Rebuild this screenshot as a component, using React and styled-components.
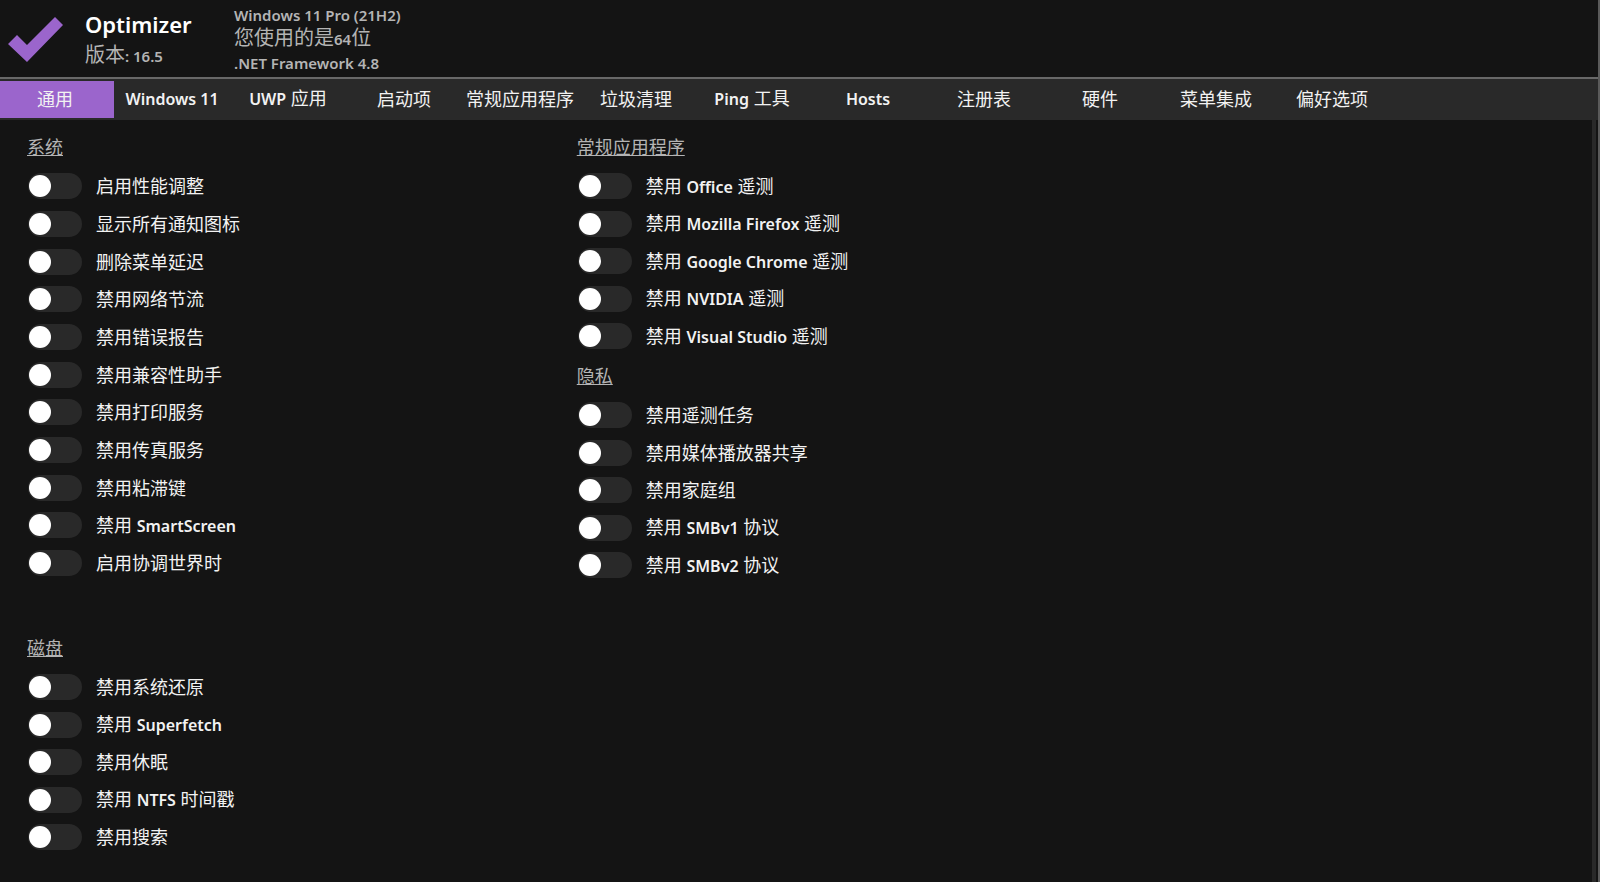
import React, { useState } from "react";
import styled, { createGlobalStyle } from "styled-components";

const GlobalStyle = createGlobalStyle`
    * {
        box-sizing: border-box;
    }

    body {
        margin: 0;
        background-color: #141414;
        color: #f2f2f2;
        font-family: "Noto Sans", "Noto Sans CJK SC", sans-serif;
        font-size: 18px;
        line-height: 24px;
    }
`

const StyledWindow = styled.div`
    display: flex;
    flex-direction: column;
    min-height: 100vh;
    border-right: 2px solid #5a5a5a;
`

const StyledHeader = styled.header`
    display: flex;
    align-items: flex-start;
    height: 79px;
    padding: 2px 8px;
    color: #b4b4b4;
    border-bottom: 2px solid #686868;

    & svg {
        width: 55px;
        height: 45px;
        margin-top: 15px;
        flex-shrink: 0;
    }
`

const Brand = styled.div`
    width: 149px;
    margin-left: 22px;
    padding-top: 8px;

    & h1 {
        margin: 0 0 2px;
        color: #ffffff;
        font-size: 22px;
        font-weight: 600;
        line-height: 28px;
    }

    & p {
        margin: 0;
        font-size: 20px;
        line-height: 30px;
    }
`

const SystemInfo = styled.ul`
    list-style: none;
    margin: 0;
    padding: 0;
    font-size: 20px;

    & li {
        height: 24px;
    }
`

const Latin = styled.span`
    font-size: ${({ $size }) => $size || 16}px;
    font-weight: 600;
`

const TabBar = styled.nav`
    display: flex;
    height: 41px;
    padding: 2px 0;
    background-color: #292929;
`

const Tab = styled.button`
    width: 116px;
    padding: 0 0 2px;
    border: none;
    background-color: ${({ $active }) => ($active ? "#9b65cc" : "transparent")};
    color: inherit;
    font: inherit;
    white-space: nowrap;
    cursor: pointer;

    &:first-child {
        width: 114px;
        padding-right: 4px;
    }
`

const Panel = styled.main`
    display: flex;
    flex: 1;
    gap: 2px;
    padding: 15px 0 0 27px;
    margin-right: 2px;
    border-right: 4px solid #292929;
`

const Column = styled.div`
    flex: 0 0 35%;
`

const Section = styled.section`
    margin-bottom: ${({ $gap }) => $gap || 0}px;

    & h2 {
        margin: 0 0 8px;
        color: #b4b4b4;
        font-size: 18px;
        font-weight: 400;
        line-height: 24px;
        text-decoration: underline;
        text-underline-offset: 1px;
    }
`

const ToggleList = styled.ul`
    display: grid;
    grid-auto-rows: ${({ $rows }) => $rows || "38px 37px"};
    list-style: none;
    margin: 0;
    padding: 0;
`

const ToggleLabel = styled.label`
    display: flex;
    align-items: center;
    gap: 14px;
    height: 100%;
    padding-left: 1px;
    cursor: pointer;
`

const Switch = styled.input`
    appearance: none;
    flex-shrink: 0;
    display: flex;
    align-items: center;
    width: 54px;
    height: 26px;
    margin: 0;
    padding: 0 1px;
    border-radius: 13px;
    background-color: #292929;
    cursor: pointer;

    &::before {
        content: "";
        width: 22px;
        height: 22px;
        border-radius: 50%;
        background-color: #ffffff;
    }

    &:checked {
        justify-content: flex-end;
        background-color: #9b65cc;
    }
`

const tabs = ["通用", "Windows 11", "UWP 应用", "启动项", "常规应用程序", "垃圾清理", "Ping 工具", "Hosts", "注册表", "硬件", "菜单集成", "偏好选项"];

const system = ["启用性能调整", "显示所有通知图标", "删除菜单延迟", "禁用网络节流", "禁用错误报告", "禁用兼容性助手", "禁用打印服务", "禁用传真服务", "禁用粘滞键", "禁用 SmartScreen", "启用协调世界时"];

const disk = ["禁用系统还原", "禁用 Superfetch", "禁用休眠", "禁用 NTFS 时间戳", "禁用搜索"];

const apps = ["禁用 Office 遥测", "禁用 Mozilla Firefox 遥测", "禁用 Google Chrome 遥测", "禁用 NVIDIA 遥测", "禁用 Visual Studio 遥测"];

const privacy = ["禁用遥测任务", "禁用媒体播放器共享", "禁用家庭组", "禁用 SMBv1 协议", "禁用 SMBv2 协议"];

// Latin words are set smaller and bolder than the Chinese around them
const MixedText = ({ text, size }) => (
    <span>
        {text.split(/([\x21-\x7e]+(?: [\x21-\x7e]+)*)/).map((part, index) => (
            index % 2 ? <Latin key={index} $size={size}>{part}</Latin> : part
        ))}
    </span>
);

const ToggleSection = ({ title, items, gap, rows }) => (
    <Section $gap={gap}>
        <h2>{title}</h2>
        <ToggleList $rows={rows}>
            {items.map((item) => (
                <li key={item}>
                    <ToggleLabel>
                        <Switch type="checkbox" role="switch" />
                        <MixedText text={item} />
                    </ToggleLabel>
                </li>
            ))}
        </ToggleList>
    </Section>
);

const App = () => {
    const [activeTab, setActiveTab] = useState(tabs[0]);

    return (
        <>
            <GlobalStyle />
            <StyledWindow>
                <StyledHeader>
                    <svg viewBox="0 0 55 45" aria-hidden="true">
                        <path d="M0 27L9 18L19 28L47 0L55 8L19 45Z" fill="#9b65cc" />
                    </svg>
                    <Brand>
                        <h1>Optimizer</h1>
                        <p><MixedText text="版本: 16.5" size={15} /></p>
                    </Brand>
                    <SystemInfo>
                        <li><MixedText text="Windows 11 Pro (21H2)" size={15} /></li>
                        <li><MixedText text="您使用的是64位" size={15} /></li>
                        <li><MixedText text=".NET Framework 4.8" size={15} /></li>
                    </SystemInfo>
                </StyledHeader>
                <TabBar>
                    {tabs.map((tab) => (
                        <Tab key={tab} type="button" $active={tab === activeTab} onClick={() => setActiveTab(tab)}>
                            <MixedText text={tab} />
                        </Tab>
                    ))}
                </TabBar>
                <Panel>
                    <Column>
                        <ToggleSection title="系统" items={system} gap={54} rows="38px 38px 37px" />
                        <ToggleSection title="磁盘" items={disk} />
                    </Column>
                    <Column>
                        <ToggleSection title="常规应用程序" items={apps} gap={9} />
                        <ToggleSection title="隐私" items={privacy} />
                    </Column>
                </Panel>
            </StyledWindow>
        </>
    );
}

export default App;
